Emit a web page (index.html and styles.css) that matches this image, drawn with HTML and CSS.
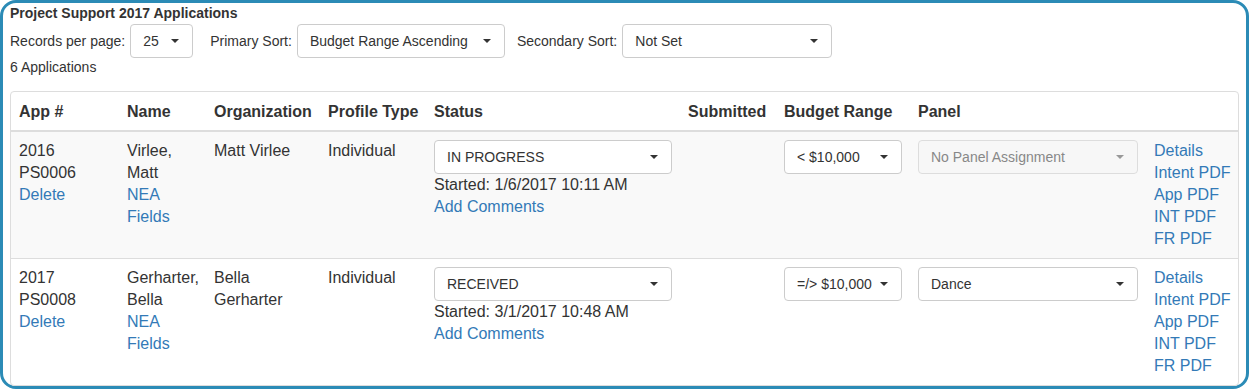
FILE: index.html
```html
<!DOCTYPE html>
<html>
<head>
<meta charset="utf-8">
<link rel="stylesheet" href="styles.css">
</head>
<body>
<div class="frame">
  <div class="title">Project Support 2017 Applications</div>
  <div class="controls">
    <span class="label">Records per page:</span>
    <div class="select sel-records"><span>25</span><i class="caret"></i></div>
    <span class="label lbl-primary">Primary Sort:</span>
    <div class="select sel-primary"><span>Budget Range Ascending</span><i class="caret"></i></div>
    <span class="label lbl-secondary">Secondary Sort:</span>
    <div class="select sel-secondary"><span>Not Set</span><i class="caret"></i></div>
  </div>
  <div class="count">6 Applications</div>
  <div class="panel">
    <table class="apps">
      <colgroup>
        <col class="c-app"><col class="c-name"><col class="c-org"><col class="c-type"><col class="c-status"><col class="c-sub"><col class="c-budget"><col class="c-panel"><col class="c-links">
      </colgroup>
      <thead>
        <tr>
          <th>App #</th><th>Name</th><th>Organization</th><th>Profile Type</th><th>Status</th><th>Submitted</th><th>Budget Range</th><th>Panel</th><th></th>
        </tr>
      </thead>
      <tbody>
        <tr class="odd">
          <td>2016<br>PS0006<br><a href="#">Delete</a></td>
          <td>Virlee, Matt<br><a href="#">NEA Fields</a></td>
          <td>Matt Virlee</td>
          <td>Individual</td>
          <td><div class="select full"><span>IN PROGRESS</span><i class="caret"></i></div>Started: 1/6/2017 10:11 AM<br><a href="#">Add Comments</a></td>
          <td></td>
          <td><div class="select full"><span>&lt; $10,000</span><i class="caret"></i></div></td>
          <td><div class="select full disabled"><span>No Panel Assignment</span><i class="caret"></i></div></td>
          <td class="links"><a href="#">Details</a><a href="#">Intent PDF</a><a href="#">App PDF</a><a href="#">INT PDF</a><a href="#">FR PDF</a></td>
        </tr>
        <tr>
          <td>2017<br>PS0008<br><a href="#">Delete</a></td>
          <td>Gerharter, Bella<br><a href="#">NEA Fields</a></td>
          <td>Bella Gerharter</td>
          <td>Individual</td>
          <td><div class="select full"><span>RECEIVED</span><i class="caret"></i></div>Started: 3/1/2017 10:48 AM<br><a href="#">Add Comments</a></td>
          <td></td>
          <td><div class="select full"><span>=/&gt; $10,000</span><i class="caret"></i></div></td>
          <td><div class="select full"><span>Dance</span><i class="caret"></i></div></td>
          <td class="links"><a href="#">Details</a><a href="#">Intent PDF</a><a href="#">App PDF</a><a href="#">INT PDF</a><a href="#">FR PDF</a></td>
        </tr>
      </tbody>
    </table>
  </div>
</div>
</body>
</html>
```
FILE: styles.css
```css
html, body {
  margin: 0;
  padding: 0;
  background: #fff;
}
body {
  font-family: "Liberation Sans", Arial, sans-serif;
  color: #333;
  font-size: 14px;
  overflow: hidden;
  height: 389px;
}
.frame {
  box-sizing: border-box;
  width: 1249px;
  height: 389px;
  border: 3px solid #2b8bb6;
  border-radius: 16px;
  padding: 0 7px 0 7px;
}
.title {
  font-weight: bold;
  font-size: 14px;
  line-height: 20px;
}
.controls {
  display: flex;
  align-items: center;
  margin-top: 1px;
  height: 34px;
}
.label {
  font-size: 14px;
  white-space: nowrap;
}
.select {
  box-sizing: border-box;
  display: flex;
  align-items: center;
  justify-content: space-between;
  height: 34px;
  padding: 0 13px 0 12px;
  border: 1px solid #ccc;
  border-radius: 4px;
  background: #fff;
  font-size: 14px;
  color: #333;
  white-space: nowrap;
}
.caret {
  display: block;
  width: 0;
  height: 0;
  border-left: 4px solid transparent;
  border-right: 4px solid transparent;
  border-top: 4px solid #333;
  flex: none;
}
.sel-records {
  width: 63px;
  margin-left: 5px;
}
.lbl-primary {
  margin-left: 17px;
}
.sel-primary {
  width: 208px;
  margin-left: 5px;
}
.lbl-secondary {
  margin-left: 12px;
}
.sel-secondary {
  width: 210px;
  margin-left: 5px;
}
.count {
  font-size: 14px;
  line-height: 18px;
  margin-top: 0;
}
.panel {
  margin-top: 15px;
  border: 1px solid #ddd;
  border-radius: 4px;
  background: #fff;
  overflow: hidden;
}
.apps {
  width: 100%;
  table-layout: fixed;
  border-collapse: collapse;
  font-size: 16px;
  line-height: 22px;
}
.c-app { width: 108px; }
.c-name { width: 87px; }
.c-org { width: 114px; }
.c-type { width: 106px; }
.c-status { width: 254px; }
.c-sub { width: 96px; }
.c-budget { width: 134px; }
.c-panel { width: 236px; }
.c-links { width: 92px; }
.apps th {
  text-align: left;
  font-weight: bold;
  padding: 9px 8px 7px;
  border-bottom: 2px solid #ddd;
  white-space: nowrap;
}
.apps td {
  vertical-align: top;
  padding: 8px;
  border-top: 1px solid #ddd;
}
.apps tbody tr:first-child td {
  border-top: none;
}
.apps tr.odd td {
  background: #f9f9f9;
}
.apps a {
  color: #337ab7;
  text-decoration: none;
}
.links a {
  display: block;
  white-space: nowrap;
}
.select.full {
  width: 100%;
}
.select.disabled {
  background: #f7f7f7;
  color: #888;
  border-color: #ddd;
}
.select.disabled .caret {
  border-top-color: #999;
}
```
